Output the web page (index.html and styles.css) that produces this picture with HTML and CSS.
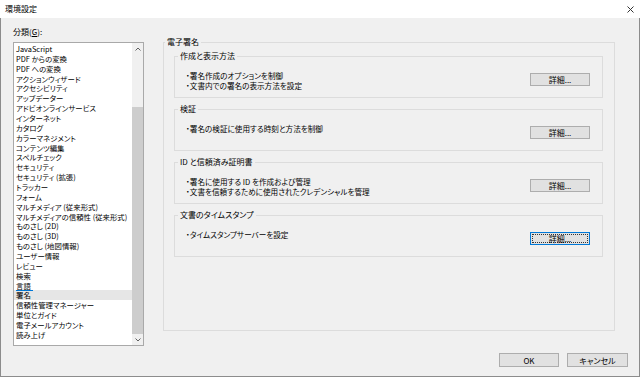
FILE: index.html
```html
<!DOCTYPE html>
<html lang="ja">
<head>
    <meta charset="UTF-8">
    <title>環境設定</title>
    <link rel="stylesheet" href="styles.css">
</head>
<body>
    <div class="window">
        <div class="titlebar">
            <span class="title">環境設定</span>
            <svg class="close" width="7" height="7" viewBox="0 0 7 7">
                <path d="M0.5 0.5 L6.5 6.5 M6.5 0.5 L0.5 6.5" stroke="#333" stroke-width="1" fill="none"/>
            </svg>
        </div>

        <div class="client">
            <div class="main">
                <!-- Category list -->
                <div class="category">
                    <div class="category-label">分類(<u>G</u>):</div>
                    <div class="listbox">
                        <ul class="list-items">
                            <li>JavaScript</li>
                            <li>PDF からの変換</li>
                            <li>PDF への変換</li>
                            <li>アクションウィザード</li>
                            <li>アクセシビリティ</li>
                            <li>アップデーター</li>
                            <li>アドビオンラインサービス</li>
                            <li>インターネット</li>
                            <li>カタログ</li>
                            <li>カラーマネジメント</li>
                            <li>コンテンツ編集</li>
                            <li>スペルチェック</li>
                            <li>セキュリティ</li>
                            <li>セキュリティ (拡張)</li>
                            <li>トラッカー</li>
                            <li>フォーム</li>
                            <li>マルチメディア (従来形式)</li>
                            <li>マルチメディアの信頼性 (従来形式)</li>
                            <li>ものさし (2D)</li>
                            <li>ものさし (3D)</li>
                            <li>ものさし (地図情報)</li>
                            <li>ユーザー情報</li>
                            <li>レビュー</li>
                            <li>検索</li>
                            <li><span class="hover-line">言語</span></li>
                            <li class="selected">署名</li>
                            <li>信頼性管理マネージャー</li>
                            <li>単位とガイド</li>
                            <li>電子メールアカウント</li>
                            <li>読み上げ</li>
                        </ul>
                        <div class="scrollbar">
                            <div class="scroll-btn up">
                                <svg width="6" height="4" viewBox="0 0 6 4"><path d="M0.5 3.5 L3 1 L5.5 3.5" stroke="#606060" stroke-width="1" fill="none"/></svg>
                            </div>
                            <div class="scroll-track">
                                <div class="scroll-thumb"></div>
                            </div>
                            <div class="scroll-btn down">
                                <svg width="6" height="4" viewBox="0 0 6 4"><path d="M0.5 0.5 L3 3 L5.5 0.5" stroke="#606060" stroke-width="1" fill="none"/></svg>
                            </div>
                        </div>
                    </div>
                </div>

                <!-- Signature settings -->
                <fieldset class="panel">
                    <legend>電子署名</legend>

                    <fieldset class="group">
                        <legend>作成と表示方法</legend>
                        <div class="group-body">
                            <ul class="bullets">
                                <li>・署名作成のオプションを制御</li>
                                <li>・文書内での署名の表示方法を設定</li>
                            </ul>
                            <button class="btn detail">詳細...</button>
                        </div>
                    </fieldset>

                    <fieldset class="group">
                        <legend>検証</legend>
                        <div class="group-body">
                            <ul class="bullets">
                                <li>・署名の検証に使用する時刻と方法を制御</li>
                            </ul>
                            <button class="btn detail">詳細...</button>
                        </div>
                    </fieldset>

                    <fieldset class="group">
                        <legend>ID と信頼済み証明書</legend>
                        <div class="group-body">
                            <ul class="bullets">
                                <li>・署名に使用する ID を作成および管理</li>
                                <li>・文書を信頼するために使用されたクレデンシャルを管理</li>
                            </ul>
                            <button class="btn detail">詳細...</button>
                        </div>
                    </fieldset>

                    <fieldset class="group">
                        <legend>文書のタイムスタンプ</legend>
                        <div class="group-body">
                            <ul class="bullets">
                                <li>・タイムスタンプサーバーを設定</li>
                            </ul>
                            <button class="btn detail focused"><span class="focus-ring">詳細...</span></button>
                        </div>
                    </fieldset>
                </fieldset>
            </div>

            <div class="footer">
                <button class="btn footer-btn">OK</button>
                <button class="btn footer-btn cancel">キャンセル</button>
            </div>
        </div>
    </div>
</body>
</html>
```

FILE: styles.css
```css
:root {
    --face: #f0f0f0;
    --white: #ffffff;
    --text: #000000;
    --group-border: #dcdcdc;
    --list-border: #a9a9a9;
    --btn-face: #e1e1e1;
    --btn-border: #adadad;
    --focus: #0078d7;
}

* {
    margin: 0;
    padding: 0;
    box-sizing: border-box;
}

body {
    font-family: "Noto Sans CJK JP", "Noto Sans", sans-serif;
    font-size: 8px;
    font-feature-settings: "palt";
    color: var(--text);
    background: var(--face);
}

.window {
    width: 640px;
    height: 377px;
    display: flex;
    flex-direction: column;
}

.titlebar {
    height: 18px;
    background: var(--white);
    display: flex;
    align-items: center;
    justify-content: space-between;
    padding: 0 6px 0 5px;
}

.title {
    line-height: 10px;
}

.client {
    flex: 1;
    display: flex;
    flex-direction: column;
    border: 1px solid #8c8c8c;
    border-top: none;
}

.main {
    display: flex;
    align-items: flex-start;
    padding: 9px 0 0 12px;
}

/* Category list */
.category {
    width: 131px;
}

.category-label {
    line-height: 10px;
    margin-bottom: 5px;
}

.listbox {
    height: 304px;
    display: flex;
    background: var(--white);
    border: 1px solid var(--list-border);
}

.list-items {
    flex: 1;
    list-style: none;
    padding-top: 1px;
    overflow: hidden;
    font-size: 7.4px;
}

.list-items li {
    line-height: 9.86px;
    height: 9.86px;
    padding-left: 2px;
    white-space: nowrap;
}

.list-items li.selected {
    background: #e6e6e6;
}

.hover-line {
    display: inline-block;
    border-bottom: 1px solid var(--focus);
    line-height: 9px;
    padding-right: 2px;
}

.scrollbar {
    width: 11px;
    display: flex;
    flex-direction: column;
    background: var(--face);
}

.scroll-btn {
    display: flex;
    align-items: center;
    justify-content: center;
}

.scroll-btn.up {
    height: 12px;
}

.scroll-btn.down {
    height: 11px;
}

.scroll-track {
    flex: 1;
}

.scroll-thumb {
    margin-top: 52px;
    height: 227px;
    background: #cdcdcd;
}

/* Group boxes */
fieldset {
    border: 1px solid var(--group-border);
    min-width: 0;
}

legend {
    line-height: 10px;
    padding: 0 2px;
}

.panel {
    width: 452px;
    height: 294px;
    margin: 10px 0 0 19px;
    padding: 4px 0 0 10px;
}

.panel > legend {
    margin-left: -9px;
}

.group {
    width: 429px;
    height: 47px;
    margin-bottom: 6px;
    padding: 9.5px 12px 0 11px;
}

.group > legend {
    margin-left: -8px;
}

.group-body {
    display: flex;
    justify-content: space-between;
    align-items: flex-start;
}

.bullets {
    list-style: none;
    font-size: 7.6px;
}

.bullets li {
    line-height: 10px;
    white-space: nowrap;
}

/* Buttons */
.btn {
    font-family: inherit;
    font-size: 8px;
    font-feature-settings: "palt";
    color: var(--text);
    background: var(--btn-face);
    border: 1px solid var(--btn-border);
    display: flex;
    align-items: center;
    justify-content: center;
}

.detail {
    width: 60px;
    height: 13px;
    margin-top: 2.5px;
}

.detail.focused {
    border-color: var(--focus);
    padding: 1px;
}

.focus-ring {
    flex: 1;
    align-self: stretch;
    display: flex;
    align-items: center;
    justify-content: center;
    border: 1px dotted #333;
}

.footer {
    margin-top: auto;
    display: flex;
    justify-content: flex-end;
    gap: 8px;
    padding: 0 11px 9px 0;
}

.footer-btn {
    width: 60px;
    height: 14px;
}

.footer-btn.cancel {
    width: 61px;
}
```
